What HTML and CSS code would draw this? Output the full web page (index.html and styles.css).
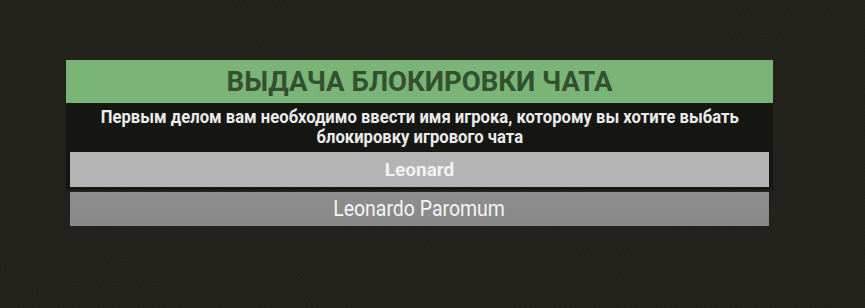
FILE: index.html
```html
<!DOCTYPE html>
<html lang="ru">
<head>
<meta charset="utf-8">
<link rel="stylesheet" href="styles.css">
</head>
<body>
<div class="dialog">
  <div class="panel">
    <div class="title">ВЫДАЧА БЛОКИРОВКИ ЧАТА</div>
    <div class="desc"><span class="narrow desc-text">Первым делом вам необходимо ввести имя игрока, которому вы хотите выбать<br>блокировку игрового чата</span></div>
    <div class="row row-input">Leonard</div>
  </div>
  <div class="row row-option"><span class="narrow option-text">Leonardo Paromum</span></div>
</div>
</body>
</html>
```
FILE: styles.css
```css
html, body {
  margin: 0;
  padding: 0;
}
body {
  width: 865px;
  height: 308px;
  overflow: hidden;
  background-color: #22211c;
  background-image:
    repeating-linear-gradient(37deg, rgba(255,255,255,0.012) 0 1px, transparent 1px 3px),
    repeating-linear-gradient(-53deg, rgba(0,0,0,0.05) 0 1px, transparent 1px 4px);
  font-family: Roboto, "Liberation Sans", sans-serif;
}
.dialog {
  margin: 60px 0 0 66px;
  width: 707px;
}
.panel {
  background: #161613;
  padding-bottom: 3px;
}
.title {
  height: 43px;
  background: #7bb477;
  color: #33502f;
  font-weight: 700;
  font-size: 27.5px;
  line-height: 43px;
  text-align: center;
}
.desc {
  color: #ececec;
  font-weight: 700;
  text-align: center;
  padding: 4px 0 5px;
  height: 40px;
}
.narrow {
  display: inline-block;
}
.desc-text {
  font-size: 17.5px;
  line-height: 20px;
  transform: scaleX(0.95);
}
.row {
  margin: 0 4px;
  text-align: center;
}
.row-input {
  height: 35px;
  line-height: 35px;
  background: #b4b4b4;
  color: #f2f2f2;
  font-weight: 700;
  font-size: 19px;
}
.row-option {
  margin-top: 2px;
  height: 34px;
  line-height: 34px;
  background: linear-gradient(180deg, #8e8e8e, #888888);
  color: #f5f5f5;
}
.option-text {
  font-size: 22px;
  transform: scaleX(0.885);
}
```
